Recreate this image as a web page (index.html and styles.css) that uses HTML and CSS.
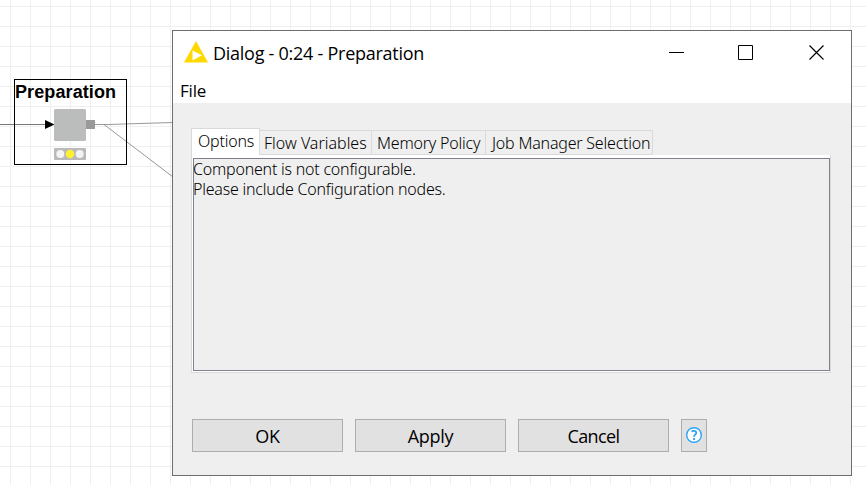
FILE: index.html
```html
<!DOCTYPE html>
<html lang="en">
<head>
<meta charset="utf-8">
<title>Dialog - 0:24 - Preparation</title>
<link rel="stylesheet" href="styles.css">
</head>
<body>
<main class="canvas">
  <svg class="links" width="180" height="200" fill="none" stroke="#999">
    <path d="M0 124.5H46" stroke="#777"/>
    <path d="M95 124.5H108L173 122.5M104 124.5L173 177"/>
    <path d="M45 120L54.500 124.500L45 129Z" fill="#000" stroke="none"/>
  </svg>
  <section class="node">
    <div class="node-name">Preparation</div>
    <svg class="node-art" width="111" height="60">
      <rect x="39" y="5" width="32" height="32" rx="1.500" fill="#babdbc"/>
      <rect x="71" y="16" width="9" height="9" fill="#999"/>
      <rect x="39" y="44" width="32" height="12" rx="1" fill="#bababa"/>
      <circle cx="45.300" cy="50" r="4" fill="#f3f3f3"/>
      <circle cx="55" cy="50" r="4.200" fill="#fff22d"/>
      <circle cx="64.700" cy="50" r="4" fill="#f3f3f3"/>
    </svg>
  </section>
  <section class="dialog">
    <header class="titlebar">
      <svg class="logo" width="24" height="22"><path d="M12 0L24 21.500H0Z" fill="#ffd800"/><path d="M8.500 9.500L18 14.200L8.500 19.500Z" fill="#fff"/></svg>
      <h1 class="title">Dialog - 0:24 - Preparation</h1>
      <svg class="controls" width="156" height="15" fill="none" stroke="#000">
        <path d="M0 7.500H15M69.500 .5H83.500V14.500H69.500Z"/>
        <path d="M140.500 .5L154.500 14.500M154.500 .5L140.500 14.500" stroke-width="1.200"/>
      </svg>
    </header>
    <nav class="menubar"><span>File</span></nav>
    <div class="content">
      <div class="tabs">
        <div class="tab active">Options</div>
        <div class="tab flow">Flow Variables</div>
        <div class="tab memory">Memory Policy</div>
        <div class="tab job">Job Manager Selection</div>
      </div>
      <div class="panel"><div class="message">
        <p class="line1">Component is not configurable.</p>
        <p class="line2">Please include Configuration nodes.</p>
      </div></div>
      <footer class="actions">
        <button class="button">OK</button>
        <button class="button">Apply</button>
        <button class="button cancel">Cancel</button>
        <button class="button help" aria-label="Help">
          <svg width="16" height="16" viewBox="0 0 16 16"><circle cx="8" cy="8" r="7.300" fill="#fff" stroke="#2ba5f7" stroke-width="1.400"/><path d="M5.500 4.600C7 3.500 10.300 3.500 10.300 5.700C10.300 7.600 8 7.500 8 9.800M8 11V13" fill="none" stroke="#2ba5f7" stroke-width="1.800"/></svg>
        </button>
      </footer>
    </div>
  </section>
</main>
</body>
</html>
```

FILE: styles.css
```css
* { box-sizing: border-box; }
body { margin: 0; overflow: hidden; color: #000; font-family: "Open Sans", sans-serif; }
h1, p { margin: 0; }
svg { display: block; flex: none; }
.canvas {
  position: relative; width: 866px; height: 485px; overflow: hidden;
  background-color: #fff;
  background-image: linear-gradient(90deg, #efefef 1px, transparent 1px), linear-gradient(#efefef 1px, transparent 1px);
  background-size: 20px 20px; background-position: 10px 6px;
}
.links { position: absolute; left: 0; top: 0; }
.node { position: absolute; left: 14px; top: 79px; width: 113px; height: 86px; border: 1px solid #000; }
.node-name { height: 24px; font: bold 18px/24px "Liberation Sans", sans-serif; letter-spacing: .1px; white-space: nowrap; }
.dialog { position: absolute; left: 172px; top: 30px; width: 680px; height: 446px; border: 1px solid #6e6e70; background: #efefef; display: flex; flex-direction: column; white-space: nowrap; }
.titlebar { height: 45px; display: flex; align-items: center; padding: 0 26px 0 11px; background: #fff; }
.logo { margin: 0 5px 3px 0; }
.title { margin-bottom: 2px; font-size: 18px; font-weight: 400; letter-spacing: -.26px; }
.controls { margin: 0 0 2px auto; }
.menubar { height: 27px; padding-left: 7px; background: #fff; font-size: 17px; line-height: 29px; letter-spacing: -.2px; }
.content { padding: 25px 20px 0 18px; }
.tabs { display: flex; align-items: flex-end; height: 27px; font-family: "Noto Sans", sans-serif; font-size: 16px; font-weight: 300; letter-spacing: -.2px; }
.tab { height: 25px; border: 1px solid #dadada; border-left: 0; padding-left: 4px; line-height: 24px; }
.tab.active { height: 27px; width: 69px; padding-left: 6px; background: #fff; border-left: 1px solid #dadada; border-bottom: 0; line-height: 25px; }
.tab.flow { width: 112px; letter-spacing: 0; }
.tab.memory { width: 114px; padding-left: 5px; }
.tab.job { width: 167px; padding-left: 6px; }
.panel { height: 218px; width: 640px; border: 1px solid #dadada; border-top: 0; padding: 3px 0 1px 1px; background: #fff; }
.message { height: 213px; width: 637px; border: 1px solid #7e828c; background: #efefef; font: 300 16px/20px "Noto Sans", sans-serif; letter-spacing: -.22px; }
.line1, .line2 { margin-left: -1px; }
.actions { display: flex; gap: 12px; padding: 46px 0 0 1px; }
.button { width: 151px; height: 33px; padding: 0; border: 1px solid #adadad; background: #e1e1e1; color: #000; font: 18px/24px "Open Sans", sans-serif; letter-spacing: -.3px; }
.button.cancel { letter-spacing: -.6px; }
.button.help { width: 26px; padding: 0 0 1px; display: flex; justify-content: center; align-items: center; }
```
